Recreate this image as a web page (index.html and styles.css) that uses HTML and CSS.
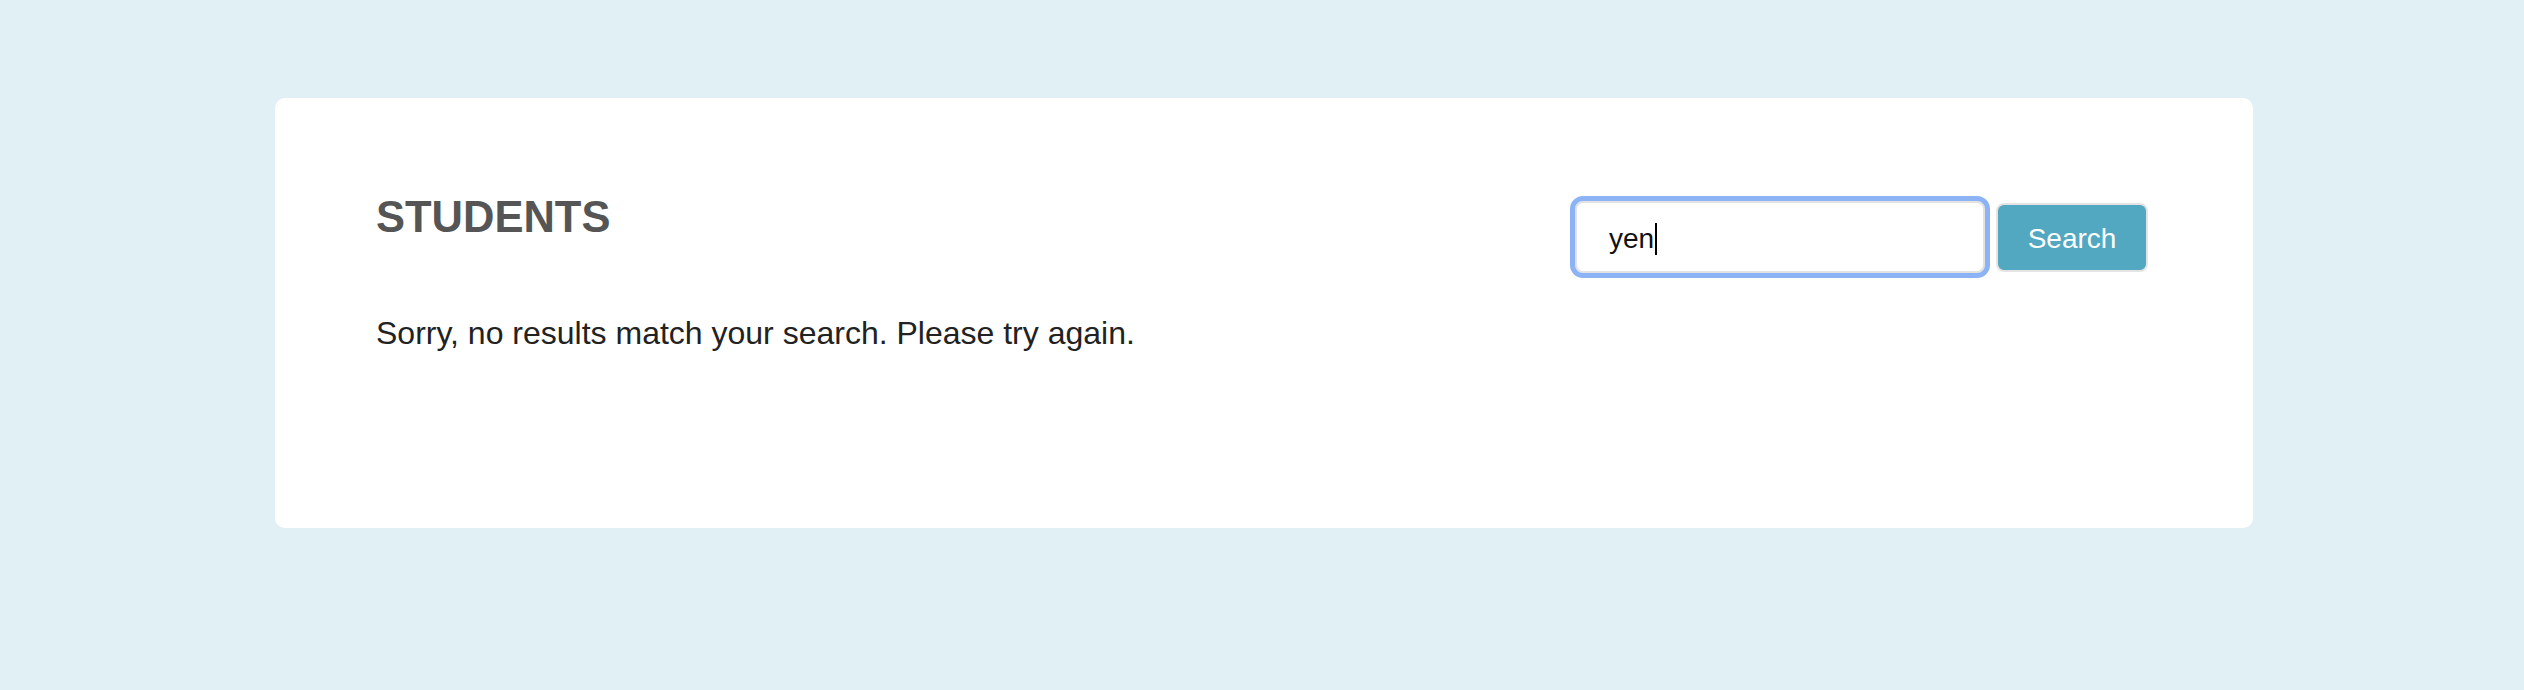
FILE: index.html
```html
<!DOCTYPE html>
<html lang="en">
<head>
<meta charset="utf-8">
<title>Students</title>
<link rel="stylesheet" href="styles.css">
</head>
<body>
<main class="card">
  <div class="card-header">
    <h1 class="title">STUDENTS</h1>
    <form class="search-form">
      <div class="search-input" role="textbox" aria-label="Search students"><span class="search-value">yen</span><span class="caret"></span></div>
      <button class="search-button" type="button">Search</button>
    </form>
  </div>
  <p class="message">Sorry, no results match your search. Please try again.</p>
</main>
</body>
</html>
```
FILE: styles.css
```css
html, body {
  margin: 0;
  padding: 0;
}

body {
  background: #e1f0f5;
  font-family: "Liberation Sans", Arial, Helvetica, sans-serif;
  min-height: 690px;
  padding-top: 98px;
  box-sizing: border-box;
}

.card {
  box-sizing: border-box;
  width: 1978px;
  height: 430px;
  margin-left: 275px;
  background: #ffffff;
  border-radius: 10px;
  padding: 94px 105px 0 101px;
}

.card-header {
  display: flex;
  justify-content: space-between;
  align-items: flex-start;
}

.title {
  margin: 0;
  font-size: 43.5px;
  font-weight: bold;
  color: #555555;
  line-height: 50px;
}

.search-form {
  display: flex;
  gap: 11px;
  margin-top: 9px;
  align-items: center;
}

.search-input {
  box-sizing: border-box;
  display: flex;
  align-items: center;
  width: 410px;
  height: 72px;
  border: 2px solid #e2e2e2;
  border-radius: 8px;
  padding: 3px 0 0 32px;
  font-size: 28px;
  color: #111111;
  outline: 5px solid #8cb3f5;
  outline-offset: 0;
  background: #ffffff;
}

.search-value {
  line-height: 32px;
}

.caret {
  display: inline-block;
  width: 2px;
  height: 32px;
  margin-left: 1px;
  background: #000000;
}

.search-button {
  box-sizing: border-box;
  width: 152px;
  height: 69px;
  border: 2px solid #e4e4e4;
  border-radius: 8px;
  background: #52a7c1;
  color: #ffffff;
  font-family: "Liberation Sans", Arial, Helvetica, sans-serif;
  font-size: 28px;
  padding: 3px 0 0 0;
}

.message {
  margin: 42px 0 0 0;
  font-size: 32px;
  color: #222222;
}
```
